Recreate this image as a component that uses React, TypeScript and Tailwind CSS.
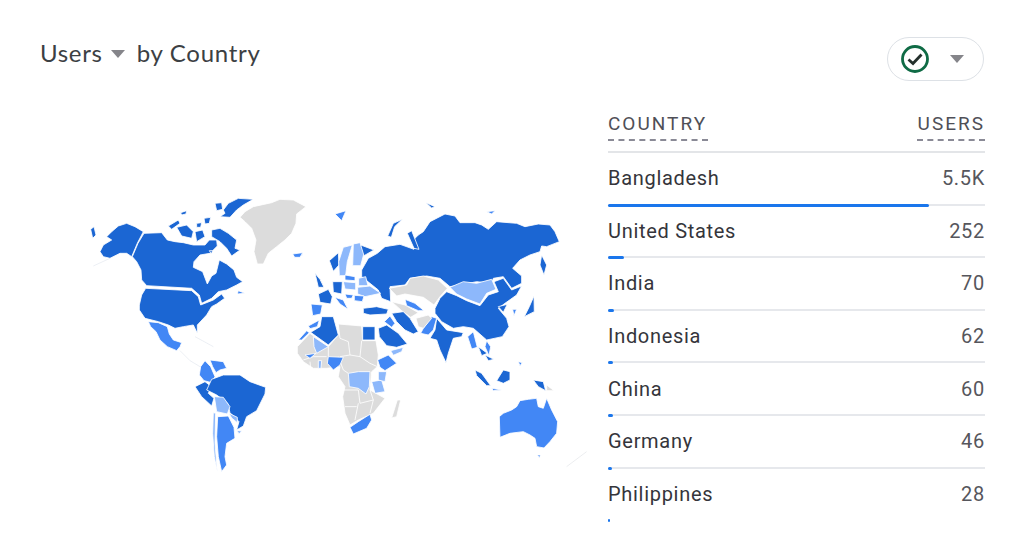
const DARK = '#1b66d3';
const MID = '#4287f5';
const LIGHT = '#8db8fb';
const GRAY = '#dcdcdc';

// shapes are traced in 3x crop coordinates, the groups scale them back down
const americas: [string, string][] = [
  [GRAY, 'M480,82 L495,65 L520,50 L575,38 L600,28 L640,30 L678,50 L650,72 L648,100 L635,130 L615,150 L590,170 L565,190 L550,222 L532,222 L522,185 L528,150 L515,115 L495,95Z'],
  [DARK, 'M60,185 L70,165 L95,150 L80,140 L95,125 L115,108 L140,100 L165,110 L190,125 L172,160 L155,200 L140,190 L120,190 L90,205 L70,200Z'],
  [DARK, 'M192,130 L245,128 L262,150 L285,155 L310,158 L340,165 L375,165 L388,150 L410,150 L412,168 L390,190 L360,195 L342,215 L340,232 L368,245 L382,282 L395,258 L408,250 L418,210 L440,222 L462,240 L470,262 L488,275 L470,285 L440,300 L415,305 L395,325 L365,340 L358,315 L335,295 L200,287 L185,270 L183,240 L170,215 L157,200 L174,160Z'],
  [DARK, 'M178,345 L185,315 L197,295 L335,302 L355,320 L362,345 L400,330 L425,312 L434,325 L410,342 L395,350 L380,375 L352,405 L352,430 L340,405 L310,410 L285,415 L265,405 L235,395 L195,385 L178,360Z'],
  [DARK, 'M395,120 L420,115 L445,130 L470,150 L465,175 L480,180 L455,198 L440,175 L420,155 L395,140Z'],
  [DARK, 'M430,60 L445,40 L475,25 L520,28 L490,45 L470,60 L450,82 L420,80 L435,70Z'],
  [DARK, 'M405,40 L425,38 L428,58 L410,62Z'],
  [DARK, 'M290,112 L320,105 L340,125 L335,145 L305,138Z'],
  [DARK, 'M265,108 L295,90 L300,100 L275,118Z'],
  [DARK, 'M345,125 L368,120 L375,140 L350,155Z'],
  [DARK, 'M350,100 L365,98 L362,112 L350,112Z'],
  [DARK, 'M372,85 L392,82 L388,100 L375,102Z'],
  [DARK, 'M302,68 L320,62 L318,72 L305,75Z'],
  [DARK, 'M32,118 L42,110 L48,135 L38,145Z'],
  [DARK, 'M388,182 L398,182 L394,192Z'],
  [MID, 'M640,192 L665,188 L668,195 L650,200Z'],
  [MID, 'M475,302 L495,310 L472,312Z'],
  [MID, 'M205,395 L235,398 L262,410 L268,432 L280,450 L305,458 L300,470 L290,482 L262,470 L240,450 L228,425 L212,410Z'],
  [MID, 'M375,512 L392,530 L405,560 L395,578 L372,572 L358,555 L362,530Z'],
  [MID, 'M390,510 L430,515 L440,535 L420,540 L408,548 L398,530Z'],
  [DARK, 'M345,590 L375,575 L395,590 L385,610 L402,625 L395,648 L365,620Z'],
  [DARK, 'M395,568 L430,555 L480,555 L510,575 L557,592 L555,612 L530,662 L500,680 L490,708 L470,720 L477,695 L450,668 L443,640 L410,615 L380,600Z'],
  [LIGHT, 'M403,620 L430,622 L450,650 L442,672 L410,665Z'],
  [MID, 'M413,680 L445,678 L462,712 L465,745 L440,760 L435,800 L440,825 L425,845 L415,800 L410,740Z'],
  [LIGHT, 'M400,668 L407,670 L405,760 L412,845 L403,800 L398,730Z'],
  [LIGHT, 'M447,670 L472,682 L472,698 L455,684Z'],
  [LIGHT, 'M470,722 L485,722 L478,732Z'],
];

const oldWorld: [string, string][] = [
  [DARK, 'M215,240 L235,205 L262,190 L285,170 L330,163 L372,178 L380,170 L370,150 L385,135 L400,125 L420,95 L465,72 L495,78 L510,98 L555,98 L575,105 L595,118 L620,95 L680,100 L705,110 L745,102 L780,105 L795,125 L808,155 L770,170 L755,168 L750,185 L720,195 L690,210 L668,235 L695,258 L695,280 L665,295 L640,260 L610,265 L605,280 L560,275 L510,285 L480,290 L450,265 L410,258 L360,265 L345,285 L300,290 L302,335 L275,325 L265,300 L240,280 L215,260Z'],
  [DARK, 'M755,195 L770,225 L762,255 L750,225Z'],
  [GRAY, 'M298,295 L350,285 L360,265 L400,258 L445,270 L472,295 L450,320 L432,345 L400,322 L345,312 L320,318Z'],
  [GRAY, 'M305,335 L345,345 L385,368 L362,382 L335,362Z'],
  [LIGHT, 'M480,292 L520,275 L560,280 L605,268 L618,298 L590,310 L570,342 L530,327 L500,312Z'],
  [DARK, 'M435,355 L450,325 L470,305 L500,317 L530,332 L570,347 L595,315 L625,305 L612,275 L640,265 L665,300 L695,288 L680,315 L645,340 L625,355 L650,385 L657,410 L637,440 L590,450 L550,415 L520,410 L490,415 L455,395 L435,370Z'],
  [DARK, 'M440,385 L470,420 L520,428 L515,440 L490,445 L475,490 L468,518 L450,480 L440,450 L420,445 L435,420Z'],
  [MID, 'M392,430 L400,415 L425,380 L440,385 L430,420 L415,435Z'],
  [GRAY, 'M378,385 L415,375 L425,385 L400,415 L385,410Z'],
  [DARK, 'M305,370 L340,365 L360,385 L385,425 L370,432 L345,420 L320,395Z'],
  [MID, 'M345,328 L375,340 L402,362 L385,362 L350,347Z'],
  [DARK, 'M220,355 L260,350 L295,358 L290,372 L240,375 L220,370Z'],
  [DARK, 'M265,415 L290,405 L325,430 L352,462 L320,472 L290,467 L268,440Z'],
  [MID, 'M283,395 L300,378 L315,400 L305,412Z'],
  [LIGHT, 'M302,482 L340,472 L335,485 L310,496Z'],
  // Africa base, countries are laid over it
  [GRAY, 'M22,470 L60,430 L115,470 L145,435 L145,402 L215,408 L218,452 L258,452 L265,495 L262,530 L245,545 L240,600 L285,625 L250,670 L205,690 L180,705 L165,670 L158,620 L165,590 L145,560 L150,530 L110,535 L70,535 L40,515 L22,490Z'],
  ['none', 'M145,405 L150,445 L175,455 L180,495 L150,500 M215,452 L210,500 L180,495 M210,500 L240,520 L262,530 M160,540 L175,550 M160,600 L205,600 L210,640 L250,630 M205,640 L195,690 M165,650 L200,650 M240,600 L250,630 L240,670 M115,470 L115,500 M40,510 L70,500 L110,500 M60,515 L62,535 M145,500 L160,540'],
  [DARK, 'M218,410 L255,410 L255,450 L218,450Z'],
  [DARK, 'M62,427 L90,410 L95,380 L130,380 L145,435 L115,465Z'],
  [MID, 'M55,408 L88,390 L82,410 L60,416Z'],
  [MID, 'M25,450 L50,422 L58,428 L35,450Z'],
  [LIGHT, 'M70,440 L115,470 L80,490 L72,470Z'],
  [MID, 'M45,495 L78,490 L60,505Z'],
  [LIGHT, 'M85,512 L95,512 L93,535 L85,535Z'],
  [MID, 'M115,500 L160,502 L150,525 L130,540 L112,520Z'],
  [MID, 'M263,510 L295,495 L320,520 L285,542 L270,532Z'],
  [LIGHT, 'M175,550 L205,545 L240,545 L238,590 L228,612 L205,595 L178,590Z'],
  [LIGHT, 'M245,575 L275,570 L285,605 L255,610Z'],
  [LIGHT, 'M265,545 L290,545 L285,575 L265,570Z'],
  [MID, 'M180,712 L205,695 L240,673 L245,690 L230,715 L190,732Z'],
  [GRAY, 'M322,630 L332,630 L320,680 L305,684Z'],
  // Europe
  [MID, 'M63,342 L97,345 L92,372 L68,377Z'],
  [DARK, 'M85,312 L115,298 L127,320 L122,342 L90,337Z'],
  [DARK, 'M75,250 L90,268 L102,292 L85,292Z'],
  [DARK, 'M128,275 L157,275 L155,312 L130,307Z'],
  [DARK, 'M118,212 L145,188 L147,225 L130,244Z'],
  [LIGHT, 'M160,172 L187,165 L172,215 L167,257 L148,257 L146,215Z'],
  [LIGHT, 'M190,162 L210,158 L222,190 L212,227 L188,227Z'],
  [DARK, 'M212,165 L252,180 L222,197Z'],
  [MID, 'M165,255 L195,260 L195,272 L165,270Z'],
  [LIGHT, 'M160,275 L197,278 L197,300 L165,297Z'],
  [LIGHT, 'M206,265 L227,260 L234,287 L206,287Z'],
  [LIGHT, 'M203,292 L240,288 L272,310 L225,320 L203,312Z'],
  [MID, 'M193,316 L222,318 L217,335 L193,332Z'],
  [MID, 'M135,322 L160,330 L174,358 L150,342Z'],
  [MID, 'M165,312 L190,315 L185,325 L170,325Z'],
  // South East Asia and the Pacific
  [MID, 'M533,440 L550,425 L562,472 L545,477Z'],
  [DARK, 'M565,470 L592,490 L575,497Z'],
  [MID, 'M590,452 L602,470 L597,497 L585,470Z'],
  [DARK, 'M585,495 L612,508 L595,512Z'],
  [DARK, 'M555,540 L575,550 L602,587 L590,587 L560,557Z'],
  [DARK, 'M620,572 L640,540 L660,545 L660,570 L640,580Z'],
  [MID, 'M605,595 L635,600 L610,602Z'],
  [DARK, 'M730,570 L760,575 L767,602 L745,590Z'],
  [GRAY, 'M770,585 L792,602 L770,602Z'],
  [MID, 'M628,680 L640,670 L665,660 L680,650 L690,632 L715,628 L740,625 L745,650 L760,655 L770,625 L785,660 L803,695 L800,730 L780,755 L762,774 L740,770 L735,745 L720,735 L700,725 L660,730 L630,742Z'],
  [DARK, 'M718,350 L732,318 L733,365 L703,380Z'],
  [DARK, 'M625,350 L652,343 L640,367Z'],
  [MID, 'M668,358 L680,358 L672,377Z'],
  [MID, 'M742,795 L752,795 L748,803Z'],
  [MID, 'M135,72 L168,62 L155,92Z'],
  [DARK, 'M408,38 L435,50 L425,54Z'],
  [MID, 'M8,192 L38,188 L30,202 L14,202Z'],
  [DARK, 'M293,138 L310,100 L337,88 L314,110 L304,142Z'],
  [DARK, 'M352,130 L365,122 L387,178 L372,175Z'],
  [MID, 'M590,65 L615,62 L605,72Z'],
  [MID, 'M685,515 L697,518 L690,527Z'],
];

const rows = [
  { name: 'Bangladesh', users: '5.5K', bar: 'w-[321px]' },
  { name: 'United States', users: '252', bar: 'w-[16px]' },
  { name: 'India', users: '70', bar: 'w-[6px]' },
  { name: 'Indonesia', users: '62', bar: 'w-[5px]' },
  { name: 'China', users: '60', bar: 'w-[5px]' },
  { name: 'Germany', users: '46', bar: 'w-[4px]' },
  { name: 'Philippines', users: '28', bar: 'w-[2px]' },
];

const Caret = () => (
  <svg width="14" height="8" viewBox="0 0 14 8">
    <path d="M0,0 L14,0 L7,8Z" fill="#85858a" />
  </svg>
);

const WorldMap = () => (
  <svg width="510" height="290" viewBox="0 0 510 290" className="blur-[0.5px]">
    <g transform="scale(0.3333)" stroke="#fff" strokeWidth="2.5" strokeLinejoin="round">
      {americas.map(([fill, d], i) => (
        <path key={i} d={d} fill={fill} />
      ))}
      <path d="M40,228 L90,205 M300,482 L330,512 L360,530 M345,440 L400,470" fill="none" stroke="#e3e7ee" strokeWidth="2" />
    </g>
    <g transform="translate(210 0) scale(0.3333)" stroke="#fff" strokeWidth="2.5" strokeLinejoin="round">
      {oldWorld.map(([fill, d], i) => (
        <path key={i} d={d} fill={fill} />
      ))}
      <path d="M830,830 L890,785" fill="none" stroke="#e3e5e8" strokeWidth="2" />
    </g>
  </svg>
);

export default function App() {
  return (
    <div className="w-[1024px] h-[551px] bg-white overflow-hidden pl-[40px] pr-[39px] pt-[37px] text-[#3c4043] font-['Roboto',sans-serif]">
      <div className="flex justify-between items-start h-[44px]">
        <div className="flex items-center h-[32px] font-['Lato',sans-serif] text-[24px] tracking-[0.7px] text-[#3c4043]">
          <span>Users</span>
          <span className="ml-[8px] mr-[12px] mt-[2px]">
            <Caret />
          </span>
          <span>by Country</span>
        </div>
        <button className="w-[97px] h-[44px] mr-[1px] rounded-full border border-[#dde1e6] flex items-center pl-[13px] gap-[21px]">
          <svg width="28" height="28" viewBox="0 0 28 28">
            <circle cx="14" cy="14" r="12.5" fill="none" stroke="#0f6b45" strokeWidth="2.8" />
            <path d="M7.5,14.5 L12,18.5 L20.5,9.5" fill="none" stroke="#24302c" strokeWidth="2.8" />
          </svg>
          <Caret />
        </button>
      </div>
      <div className="flex">
        <div className="w-[568px] shrink-0 pl-[40px] pt-[109px]">
          <WorldMap />
        </div>
        <div className="w-[377px] shrink-0">
          <div className="h-[72px] border-b-2 border-[#e3e5e8] flex justify-between items-start pt-[31px] text-[19px] leading-[24px] tracking-[2px] text-[#4f4f57]">
            <span className="h-[29px] border-b-2 border-dashed border-[#8a8a96] w-[100px]">COUNTRY</span>
            <span className="h-[29px] border-b-2 border-dashed border-[#8a8a96] w-[68px] text-right">USERS</span>
          </div>
          {rows.map((row) => (
            <div key={row.name} className="h-[52.6px] flex flex-col">
              <div className="flex-1 flex justify-between items-center text-[20px] tracking-[0.7px] leading-[24px]">
                <span className="text-[#35353b]">{row.name}</span>
                <span className="text-[#56565c]">{row.users}</span>
              </div>
              <div className={row.name === 'Philippines' ? 'h-[2px]' : 'h-[2px] bg-[#e6e8ec]'}>
                <div className={`h-[3px] rounded-full bg-[#1a76ec] ${row.bar}`} />
              </div>
            </div>
          ))}
        </div>
      </div>
    </div>
  );
}
